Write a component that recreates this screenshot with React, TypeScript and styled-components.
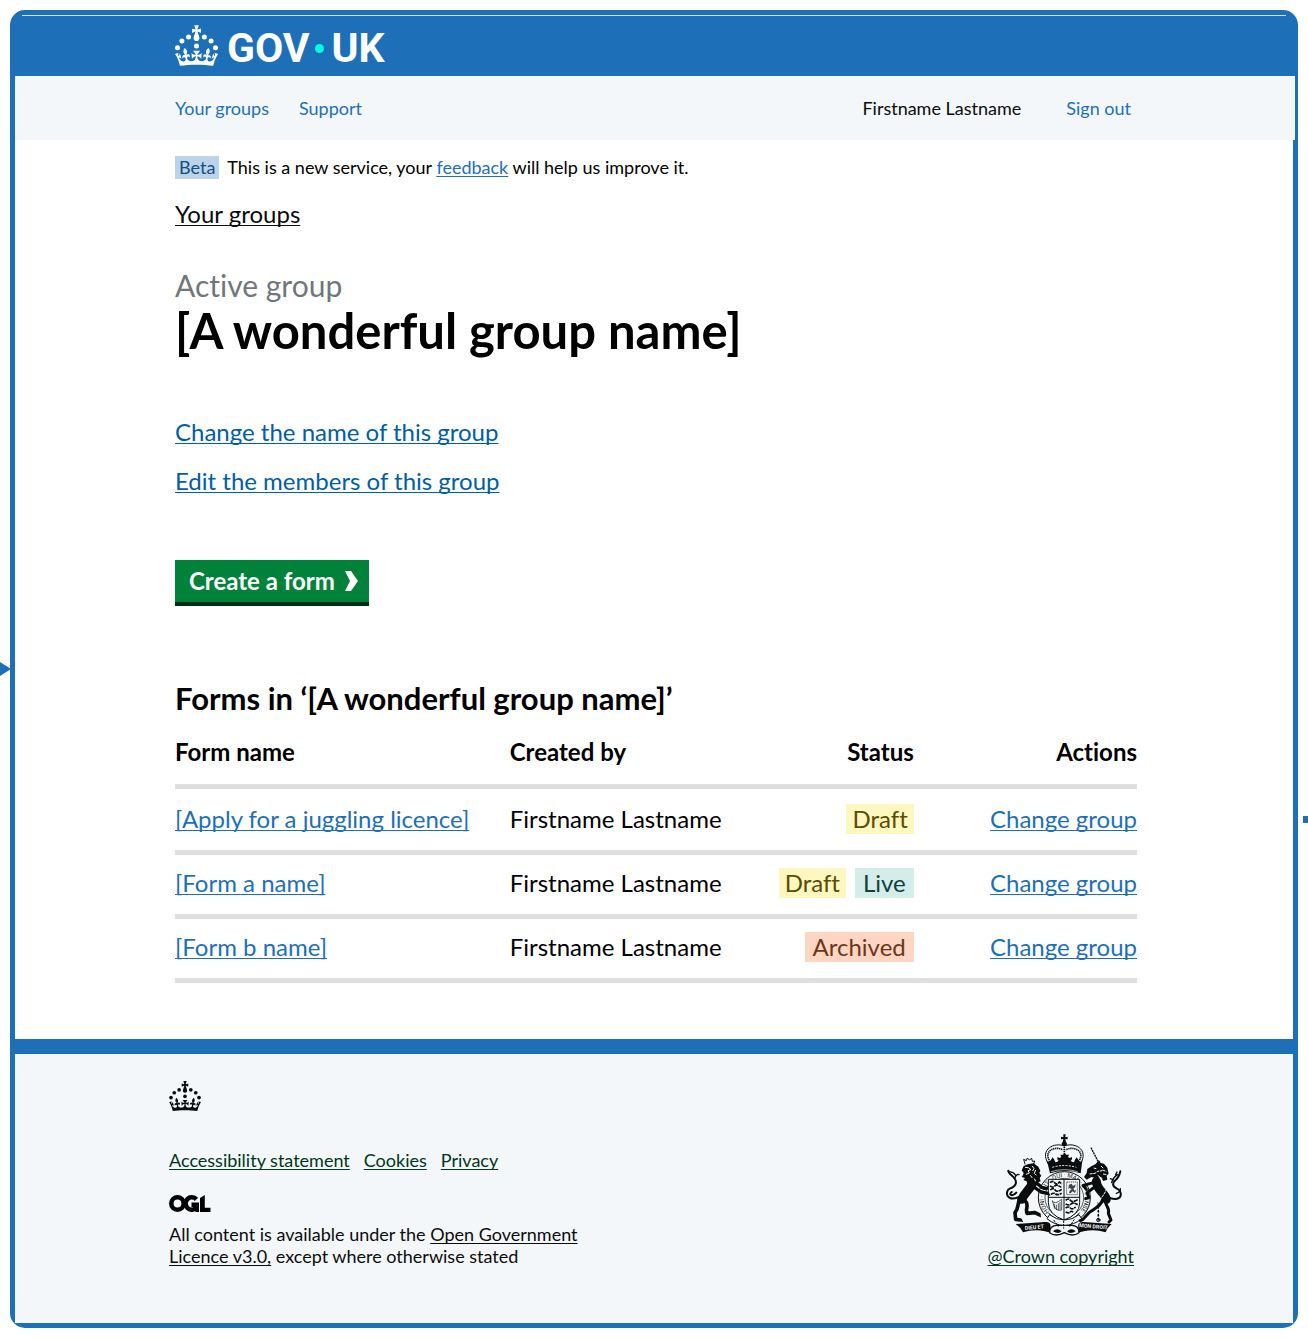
import React from "react";
import styled, { createGlobalStyle } from "styled-components";

const BLUE = "#1d70b8";
const PALE = "#f3f7fa";
const INK = "#0b0c0c";

const GlobalStyle = createGlobalStyle`
  *, *::before, *::after { box-sizing: border-box; }
  body {
    margin: 0;
    background: #fff;
    color: ${INK};
    font-family: Lato, "Open Sans", sans-serif;
    font-size: 18px;
    line-height: 22px;
    font-variant-ligatures: no-common-ligatures;
  }
`;

const Canvas = styled.div`
  position: relative;
  padding: 10px 10px 11px;
`;

const Connector = styled.svg<{ $side: "left" | "right"; $top: number }>`
  position: absolute;
  top: ${(p) => p.$top}px;
  ${(p) => p.$side}: 0;
  display: block;
`;

const Frame = styled.div`
  border: 5px solid ${BLUE};
  border-radius: 15px;
  background: #fff;
`;

const Header = styled.header`
  height: 61px;
  background: ${BLUE};
  &::before {
    content: "";
    display: block;
    height: 1px;
    margin: 0 7px;
    background: #d2e2f1;
  }
`;

const Column = styled.div`
  padding: 0 156px 0 160px;
  @media (max-width: 1100px) {
    padding: 0 24px;
  }
`;

const Logo = styled.a`
  display: flex;
  align-items: center;
  gap: 9px;
  width: max-content;
  padding-top: 6px;
  color: #fff;
  text-decoration: none;
  font: 700 41px/41px Roboto, sans-serif;
`;

const Wordmark = styled.span`
  display: flex;
  align-items: center;
  gap: 5px;
  padding-top: 6px;
`;

const Dot = styled.span`
  width: 9px;
  height: 9px;
  margin-right: 3px;
  border-radius: 50%;
  background: #00ffe0;
`;

const ServiceNav = styled.nav`
  margin-right: -2px;
  background: ${PALE};
`;

const NavRow = styled(Column)`
  display: flex;
  align-items: center;
  min-height: 64px;
  gap: 30px;
`;

const NavLink = styled.a`
  color: ${BLUE};
  text-decoration: none;
`;

const Account = styled.div`
  display: flex;
  gap: 45px;
  margin-left: auto;
  padding-right: 8px;
`;

const Main = styled(Column).attrs({ as: "main" })`
  padding-top: 16px;
  padding-bottom: 56px;
  color: #000;
`;

const Phase = styled.div`
  display: flex;
  align-items: center;
  gap: 8px;
  line-height: 23px;
`;

const BetaTag = styled.strong`
  padding: 0 4px;
  background: #bbd4ea;
  color: #144e81;
  font-weight: 400;
`;

const Link = styled.a<{ $color?: string }>`
  color: ${(p) => p.$color ?? BLUE};
  text-decoration: underline;
  text-decoration-thickness: 1px;
  text-underline-offset: 2px;
  text-decoration-skip-ink: none;
`;

const Breadcrumb = styled.nav`
  margin-top: 20px;
  font-size: 24px;
  line-height: 30px;
`;

const Caption = styled.p`
  margin: 40px 0 0;
  color: #6f777b;
  font-size: 30px;
  line-height: 32px;
`;

const Title = styled.h1`
  margin: 0;
  font-size: 49px;
  line-height: 58px;
`;

const ActionList = styled.ul`
  display: grid;
  gap: 19px;
  margin: 58px 0 64px;
  padding: 0;
  list-style: none;
  font-size: 24px;
  line-height: 30px;
`;

const CreateButton = styled.button`
  display: flex;
  align-items: center;
  gap: 10px;
  height: 46px;
  padding: 0 11px 0 14px;
  border: 0;
  border-bottom: 4px solid #002d18;
  background: #00823b;
  color: #fff;
  font: inherit;
  font-weight: 700;
  font-size: 24px;
`;

const Subtitle = styled.h2`
  margin: 74px 0 0;
  font-size: 31px;
  line-height: 36px;
`;

const Table = styled.table`
  width: 100%;
  border-collapse: separate;
  border-spacing: 0;
  table-layout: fixed;
  font-size: 24px;
  line-height: 30px;
`;

const HeadCell = styled.th<{ $align?: string; $width?: string }>`
  width: ${(p) => p.$width ?? "auto"};
  padding: 21px 0 17px;
  border-bottom: 5px solid #dedfe0;
  text-align: ${(p) => p.$align ?? "left"};
`;

const Cell = styled.td<{ $align?: string }>`
  height: 64px;
  padding: 13px 0 16px;
  border-bottom: 5px solid #dedfe0;
  text-align: ${(p) => p.$align ?? "left"};
  white-space: nowrap;
  tr:first-child > & {
    padding-top: 15px;
  }
`;

const Tags = styled.div`
  display: flex;
  justify-content: flex-end;
  gap: 9px;
`;

const tagColors = {
  Draft: ["#fff7bf", "#594d00"],
  Live: ["#d4ede8", "#10403c"],
  Archived: ["#fcd6c3", "#6e3619"],
};
type Status = keyof typeof tagColors;

const Tag = styled.span<{ $kind: Status }>`
  padding: 0 ${(p) => (p.$kind === "Draft" ? 6 : 8)}px;
  background: ${(p) => tagColors[p.$kind][0]};
  color: ${(p) => tagColors[p.$kind][1]};
`;

const Footer = styled.footer`
  border-top: 15px solid ${BLUE};
  background: ${PALE};
`;

const FooterRow = styled(Column)`
  display: flex;
  justify-content: space-between;
  align-items: flex-end;
  padding: 27px 159px 56px 154px;
`;

const FooterInfo = styled.div`
  display: flex;
  flex-direction: column;
  align-items: flex-start;
  svg { display: block; }
`;

const FooterLinks = styled.nav`
  display: flex;
  gap: 14px;
  margin: 38px 0 24px;
`;

const Licence = styled.p`
  margin: 11px 0 0;
`;

const Copyright = styled.div`
  display: flex;
  flex-direction: column;
  align-items: flex-end;
  gap: 9px;
  svg {
    display: block;
    margin-right: 11px;
  }
`;

function Crown({ width, height }: { width: number; height: number }) {
  return (
    <svg width={width} height={height} viewBox="0 0 63.4 60" fill="currentColor" aria-hidden="true">
      <circle cx="20" cy="17.6" r="3.7" />
      <circle cx="10.2" cy="23.5" r="3.7" />
      <circle cx="3.7" cy="33.2" r="3.7" />
      <circle cx="31.7" cy="30.6" r="3.7" />
      <circle cx="43.3" cy="17.6" r="3.7" />
      <circle cx="53.2" cy="23.5" r="3.7" />
      <circle cx="59.7" cy="33.2" r="3.7" />
      <path d="M33.1,9.8c.2-.1.3-.3.5-.5l4.6,2.4v-6.8l-4.6,1.5c-.1-.2-.3-.3-.5-.5l1.9-5.9h-6.7l1.9,5.9c-.2.1-.3.3-.5.5l-4.6-1.5v6.8l4.6-2.4c.1.2.3.3.5.5l-2.6,8c-.9,2.8,1.2,5.7,4.1,5.7h0c3,0,5.1-2.9,4.1-5.7l-2.6-8ZM37,37.9s-3.4,3.8-4.1,6.1c2.2,0,4.2-.5,6.4-2.8l-.7,8.5c-2-2.8-4.4-4.1-5.7-3.8.1,3.1.5,6.7,5.8,7.2,3.7.3,6.7-1.5,7-3.8.4-2.6-2-4.3-3.7-1.6-1.4-4.5,2.4-6.1,4.9-3.2-1.9-4.5-1.8-7.7,2.4-10.9,3,4,2.6,7.3-1.2,11.1,2.4-1.3,6.2,0,4,4.6-1.2-2.8-3.7-2.2-4.2.2-.3,1.7.7,3.7,3,4.2,1.9.3,4.7-.9,7-5.9-1.3,0-2.4.7-3.9,1.7l2.4-8c.6,2.3,1.4,3.7,2.2,4.5.6-1.6.5-2.8,0-5.3l5,1.8c-2.6,3.6-5.2,8.7-7.3,17.5-7.4-1.1-15.7-1.7-24.5-1.7h0c-8.8,0-17.1.6-24.5,1.7-2.1-8.9-4.7-13.9-7.3-17.5l5-1.8c-.5,2.5-.6,3.7,0,5.3.8-.8,1.6-2.3,2.2-4.5l2.4,8c-1.5-1-2.6-1.7-3.9-1.7,2.3,5,5.2,6.2,7,5.9,2.3-.4,3.3-2.4,3-4.2-.5-2.4-3-3.1-4.2-.2-2.2-4.6,1.6-6,4-4.6-3.7-3.7-4.2-7.1-1.2-11.1,4.2,3.2,4.3,6.4,2.4,10.9,2.5-2.8,6.3-1.3,4.9,3.2-1.8-2.7-4.1-1-3.7,1.6.3,2.3,3.3,4.1,7,3.8,5.4-.5,5.7-4.2,5.8-7.2-1.3-.2-3.7,1-5.7,3.8l-.7-8.5c2.2,2.3,4.2,2.7,6.4,2.8-.7-2.3-4.1-6.1-4.1-6.1h10.6Z" />
    </svg>
  );
}

/* Linked rings and corner that form the Open Government Licence mark */
function OglMark() {
  return (
    <svg width="42" height="17" viewBox="0 0 42 17" role="img" aria-label="Open Government Licence">
      <g fill="none" stroke="#000" strokeWidth="4.6">
        <circle cx="8.5" cy="8.5" r="6.2" />
        <path d="M27.4 4.4A6.2 6.2 0 1 0 27.6 12.4V9.8H22.5" />
      </g>
      <path d="M25.3 8H30V17H26.5ZM31 3L35.8 0V12.8H41.5V17H31Z" />
    </svg>
  );
}

/* Royal coat of arms: crown, garter and shield between lion and unicorn */
function CoatOfArms() {
  return (
    <svg width="118" height="104" viewBox="30 20 354 312" role="img" aria-label="Royal coat of arms">
      <defs>
        <path id="garter" d="M164 261A62 62 0 1 1 252 261" />
      </defs>
      {/* scroll and base */}
      <path d="M62 296L150 290Q170 288 166 308Q164 322 178 326Q128 306 84 321L76 308Z" fill={INK} />
      <path d="M350 296L266 290Q246 288 250 308Q252 322 238 326Q288 306 332 321L338 308Z" fill={INK} />
      <path d="M164 322Q164 300 186 300H230Q252 300 252 322Q234 336 208 322Q182 336 164 322Z" fill={PALE} stroke={INK} strokeWidth="4" />
      <path d="M174 318Q186 306 200 318Q190 328 174 318ZM242 318Q230 306 216 318Q226 328 242 318Z" fill={INK} />
      {/* garter */}
      <circle cx="208" cy="217" r="78" fill={PALE} stroke={INK} strokeWidth="3" />
      <circle cx="208" cy="217" r="58" fill={PALE} stroke={INK} strokeWidth="2" />
      <text fontFamily="Roboto, sans-serif" fontSize="18" fill={INK}>
        <textPath href="#garter" startOffset="2">HONI · SOIT · QUI · MAL · Y · PENSE</textPath>
      </text>
      {/* shield */}
      <path d="M160 162H254V232Q254 268 207 284Q160 268 160 232Z" fill={PALE} stroke={INK} strokeWidth="3" />
      <path d="M207 162V284M160 216H254" stroke={INK} strokeWidth="3" />
      <path d="M165 172q8-8 14 0t14-2l8 6M165 182q10 6 14 0t20 4M166 194q8-8 14 0t20-2M168 207q8-6 14-1t18-2M212 225q8-8 14 0t22-2M212 236q10 6 16 0t20 2M212 248q8-6 14 0t16-3M212 260q10 5 14 0t8 1" fill="none" stroke={INK} strokeWidth="5" strokeDasharray="12 2" />
      <path d="M215 170H247V208H215Z" fill="none" stroke={INK} strokeWidth="2" strokeDasharray="4 2" />
      <path d="M222 178l8-3 4 7 8-5-2 9-5 4 4 6 4-2-3 9-8-5-4 5-6 1 2-8 6-4-6-4-4 3Z" fill="#444" />
      <path d="M172 226Q178 240 200 222V254Q180 262 172 226M178 236V250M184 238V254M190 234V254M195 230V253" fill="none" stroke={INK} strokeWidth="2" />
      {/* garter buckle and strap */}
      <path d="M160 262l34 36M254 262l-34 36" stroke={INK} strokeWidth="3" />
      <path d="M164 268q20 16 44 16t44-16l8 12q-24 20-52 20t-52-20Z" fill={PALE} stroke={INK} strokeWidth="3" />
      <path d="M176 284l14 20M206 286v24M238 282l-14 22" stroke={INK} strokeWidth="3" strokeDasharray="7 3" />
      {/* crown */}
      <path d="M160 116C132 70 180 50 208 62C236 50 284 70 256 116Z" fill={PALE} stroke={INK} strokeWidth="3" />
      <path d="M166 110C142 76 182 60 204 74M250 110C274 76 234 60 212 74M208 64V100" fill="none" stroke={INK} strokeWidth="5" strokeDasharray="4 2" />
      <path d="M205 27h7l-1 9 7-2v8l-7-1 2 9c5 4 4 12-5 13c-9-1-10-9-5-13l2-9-7 1v-8l7 2Z" fill={INK} />
      <path d="M156 106l8 4 4-7 5-7 5 7 3 8 7-2 3-6h-4v-8l7 3 5-3-3-7h8l5-4 5 4h8l-3 7 5 3 7-3v8h-4l3 6 7 2 3-8 5-7 5 7 4 7 8-4-5 38q-46-14-92 0Z" fill={INK} />
      <path d="M172 126q36-11 72 0" fill="none" stroke={PALE} strokeWidth="3" strokeDasharray="6 4" />
      <path d="M168 139q40-12 80 0" fill="none" stroke={PALE} strokeWidth="2" />
      {/* lion */}
      <g fill="none" stroke={INK} strokeLinecap="round" strokeLinejoin="round">
        <path d="M90 116l-4-14 8 4 3-8 6 6 7-5 2 9 7-1-4 13" strokeWidth="3" />
        <path d="M120 156C112 188 92 196 80 222" strokeWidth="27" />
        <path d="M124 172L140 186L154 190M118 186L138 200L158 204" strokeWidth="10" />
        <path d="M74 222C66 238 72 248 60 262L62 282L76 284M90 226C104 238 90 250 96 264L120 262L132 268" strokeWidth="11" />
        <path d="M74 214C34 232 28 198 44 190C62 184 68 172 58 158C48 148 38 142 40 136M50 200C38 210 54 214 64 202" strokeWidth="6" />
        <path d="M58 160q8-16 14-12M42 140q12-2 20 10M152 190l6-6M158 204l6 5M132 268l4 6M76 284l6 4" strokeWidth="4" />
      </g>
      <path d="M86 122l14-6 16-2 14 10 6 12-3 7 6 8-5 7 3 10-10 4-4 10-12-4-8-4-6 4-2-10-10-4 5-6-10-3 4-6 2-6-6-8Z" fill={INK} />
      <path d="M90 126l10 1 8 6-9 3 4 7-10 4M112 122l5 8-4 7M122 134l-4 10 6 6M106 150l6 8M118 160l4 8" fill="none" stroke={PALE} strokeWidth="3" />
      {/* unicorn */}
      <path d="M288 67L312 114" stroke={INK} strokeWidth="4" strokeDasharray="6 2" />
      <path d="M302 116l10-12 5 9 10 2 10 12 4 18-6 6 2 12-12 4-8-12-12 4-16-4-14 8-8-8 8-12 2-12 12-8Z" fill={INK} />
      <g fill="none" stroke={INK} strokeLinecap="round" strokeLinejoin="round">
        <path d="M304 168C306 196 332 204 334 222" strokeWidth="27" />
        <path d="M296 172L264 180L274 192M298 186L276 202L282 216L272 220" strokeWidth="9" />
        <path d="M332 228C330 242 346 248 340 264L348 284L342 290M322 222C322 240 298 250 282 262L264 282L256 286" strokeWidth="9" />
        <path d="M344 218C384 230 384 198 366 190C350 182 352 172 362 164C372 156 374 146 376 138" strokeWidth="6" />
        <path d="M350 172q4-16 18-24M364 204q14-4 12-14M346 160l10 4M362 148l4-8" strokeWidth="4" />
        <path d="M310 232V284" strokeWidth="5" strokeDasharray="4 8" />
        <circle cx="310" cy="284" r="5" strokeWidth="3" />
      </g>
      <path d="M284 146l16-2 8-6 14-2M296 128l8 2M318 122l8 8M322 134l12 4M324 146l12 2M308 150l14 10M330 168C346 196 318 212 308 236" fill="none" stroke={PALE} strokeWidth="3" strokeDasharray="9 2" />
      <g fill={PALE} fontFamily="Roboto, sans-serif" fontWeight="700" fontSize="16">
        <text x="90" y="314" transform="rotate(-5 90 314)">DIEU ET</text>
        <text x="252" y="305" transform="rotate(5 252 305)">MON DROIT</text>
      </g>
    </svg>
  );
}

const forms: { name: string; owner: string; status: Status[] }[] = [
  { name: "[Apply for a juggling licence]", owner: "Firstname Lastname", status: ["Draft"] },
  { name: "[Form a name]", owner: "Firstname Lastname", status: ["Draft", "Live"] },
  { name: "[Form b name]", owner: "Firstname Lastname", status: ["Archived"] },
];

export default function App() {
  return (
    <Canvas>
      <GlobalStyle />
      <Frame>
        <Header>
          <Column>
            <Logo href="#" aria-label="GOV.UK">
              <Crown width={43} height={41} />
              <Wordmark>
                <span>GOV</span>
                <Dot />
                <span>UK</span>
              </Wordmark>
            </Logo>
          </Column>
        </Header>
        <ServiceNav aria-label="Service">
          <NavRow>
            <NavLink href="#">Your groups</NavLink>
            <NavLink href="#">Support</NavLink>
            <Account>
              <span>Firstname Lastname</span>
              <NavLink href="#">Sign out</NavLink>
            </Account>
          </NavRow>
        </ServiceNav>
        <Main>
          <Phase>
            <BetaTag>Beta</BetaTag>
            <span>
              This is a new service, your <Link href="#">feedback</Link> will help us improve it.
            </span>
          </Phase>
          <Breadcrumb aria-label="Breadcrumb">
            <Link href="#" $color={INK}>Your groups</Link>
          </Breadcrumb>
          <Caption>Active group</Caption>
          <Title>[A wonderful group name]</Title>
          <ActionList>
            <li><Link href="#" $color="#005ea5">Change the name of this group</Link></li>
            <li><Link href="#" $color="#005ea5">Edit the members of this group</Link></li>
          </ActionList>
          <CreateButton type="button">
            Create a form
            <svg width="13" height="20" viewBox="0 0 13 20" fill="currentColor" aria-hidden="true">
              <path d="M0 0H6L13 10L6 20H0L5 10Z" />
            </svg>
          </CreateButton>
          <Subtitle>Forms in ‘[A wonderful group name]’</Subtitle>
          <Table>
            <thead>
              <tr>
                <HeadCell scope="col" $width="34.8%">Form name</HeadCell>
                <HeadCell scope="col" $width="23.2%">Created by</HeadCell>
                <HeadCell scope="col" $align="right" $width="18.8%">Status</HeadCell>
                <HeadCell scope="col" $align="right">Actions</HeadCell>
              </tr>
            </thead>
            <tbody>
              {forms.map((form) => (
                <tr key={form.name}>
                  <Cell><Link href="#">{form.name}</Link></Cell>
                  <Cell>{form.owner}</Cell>
                  <Cell>
                    <Tags>
                      {form.status.map((s) => <Tag key={s} $kind={s}>{s}</Tag>)}
                    </Tags>
                  </Cell>
                  <Cell $align="right"><Link href="#">Change group</Link></Cell>
                </tr>
              ))}
            </tbody>
          </Table>
        </Main>
        <Footer>
          <FooterRow>
            <FooterInfo>
              <Crown width={32} height={30} />
              <FooterLinks aria-label="Footer">
                <Link href="#" $color="#003618">Accessibility statement</Link>
                <Link href="#" $color="#003618">Cookies</Link>
                <Link href="#" $color="#003618">Privacy</Link>
              </FooterLinks>
              <OglMark />
              <Licence>
                All content is available under the{" "}
                <Link href="#" $color={INK}>Open Government<br />Licence v3.0,</Link> except where otherwise stated
              </Licence>
            </FooterInfo>
            <Copyright>
              <CoatOfArms />
              <Link href="#" $color="#003618">@Crown copyright</Link>
            </Copyright>
          </FooterRow>
        </Footer>
      </Frame>
      <Connector $side="left" $top={662} width="11" height="14" viewBox="0 0 11 14" aria-hidden="true">
        <path d="M0 0L11 7L0 14Z" fill={BLUE} />
      </Connector>
      <Connector $side="right" $top={816} width="5" height="7" viewBox="0 0 5 7" aria-hidden="true">
        <path d="M0 0H5V7H0Z" fill={BLUE} />
      </Connector>
    </Canvas>
  );
}
